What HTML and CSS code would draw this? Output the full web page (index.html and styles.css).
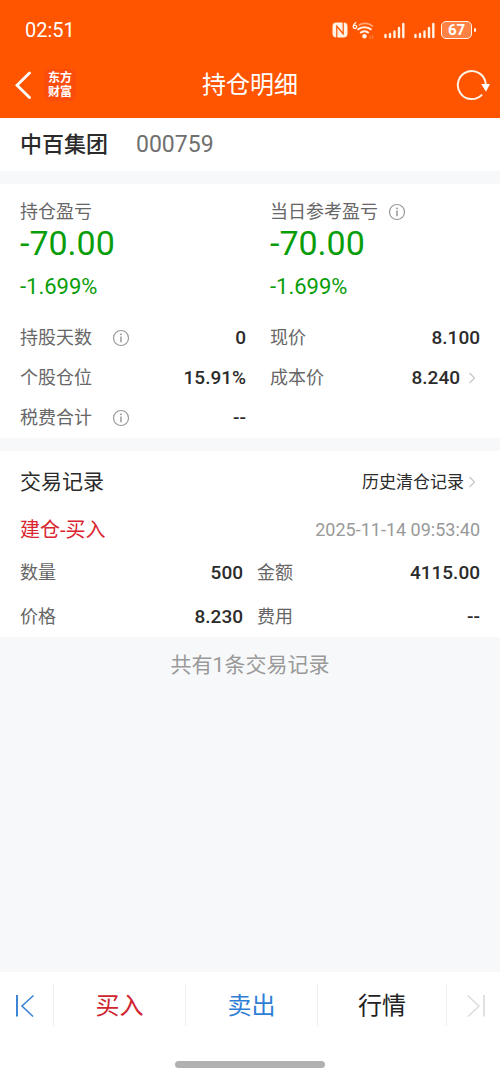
FILE: index.html
```html
<!DOCTYPE html>
<html lang="zh-CN">
<head>
<meta charset="utf-8">
<meta name="viewport" content="width=device-width, initial-scale=1">
<title>持仓明细</title>
<link rel="stylesheet" href="styles.css">
</head>
<body>
<header class="top">
  <div class="status">
    <time class="clock">02:51</time>
    <div class="status-icons">
      <svg class="nfc" width="16" height="16" viewBox="0 0 16 16" aria-hidden="true">
        <rect x=".5" y=".5" width="15" height="15" rx="4" fill="#fff3e6"/>
        <path d="M4.800 16V4.200l5.200 5.900M11.200 0v11.800L6 5.900" fill="none" stroke="#ff5500" stroke-width="1.200"/>
      </svg>
      <svg class="wifi" width="23" height="19" viewBox="0 0 23 19" aria-hidden="true">
        <path d="M4.200 1.200C2.200 2.500 1.200 4 1.200 5.600" fill="none" stroke="#fff3e6" stroke-width="1.300"/>
        <circle cx="3" cy="5.800" r="1.700" fill="none" stroke="#fff3e6" stroke-width="1.300"/>
        <path d="M6.500 4.300a12 12 0 0 1 14.600 1.200" fill="none" stroke="#ffa576" stroke-width="1.600"/>
        <path d="M5.500 8.800a10.500 10.500 0 0 1 14 0M8.200 12a6.500 6.500 0 0 1 8.600 0" fill="none" stroke="#fff3e6" stroke-width="2"/>
        <circle cx="12.500" cy="15.200" r="2.200" fill="#fff3e6"/>
        <path d="M18.200 14v4M20.700 14v4" stroke="#ff7a38" stroke-width="1.200"/>
      </svg>
      <svg class="signal" width="21" height="17" viewBox="0 0 21 17" aria-hidden="true">
        <path d="M1.500 13v2M6 12v3M10.500 9.500V15M15 6V15M19.300 2v13" fill="none" stroke="#fff3e6" stroke-width="2.400" stroke-linecap="round"/>
      </svg>
      <svg class="signal" width="21" height="17" viewBox="0 0 21 17" aria-hidden="true">
        <path d="M1.500 13v2M6 12v3M10.500 9.500V15M15 6V15M19.300 2v13" fill="none" stroke="#fff3e6" stroke-width="2.400" stroke-linecap="round"/>
      </svg>
      <span class="battery"><span class="battery-body">67</span><span class="battery-tip"></span></span>
    </div>
  </div>
  <div class="navbar">
    <div class="nav-left">
      <button class="icon-button" type="button" aria-label="返回">
        <svg width="18" height="28" viewBox="0 0 18 28"><path d="M15.500 2L3 14.300 15.500 26.500" fill="none" stroke="#fff" stroke-width="2.800" stroke-linecap="round"/></svg>
      </button>
      <span class="brand">东方财富</span>
    </div>
    <h1 class="title">持仓明细</h1>
    <div class="nav-right">
      <button class="icon-button" type="button" aria-label="刷新">
        <svg width="34" height="32" viewBox="0 0 34 32"><path d="M26.100 25.600A14 14 0 1 1 29.800 15" fill="none" stroke="#fff3e6" stroke-width="2"/><path d="M25.200 15h8.800L30 22.800z" fill="#fff"/></svg>
      </button>
    </div>
  </div>
</header>

<main class="content">
  <section class="panel stock">
    <h2 class="stock-name">中百集团</h2>
    <span class="stock-code">000759</span>
  </section>

  <section class="panel holdings">
    <div class="summary">
      <div class="label">持仓盈亏</div>
      <div class="profit">-70.00</div>
      <div class="rate">-1.699%</div>
    </div>
    <div class="summary">
      <div class="label label-tight">当日参考盈亏
        <button class="icon-button" type="button" aria-label="当日参考盈亏说明"><svg width="18" height="18" viewBox="0 0 18 18"><circle cx="9" cy="9" r="7.500" fill="none" stroke="#999" stroke-width="1.200"/><path d="M9 7.500v5.700" stroke="#888" stroke-width="1.300"/><circle cx="9" cy="5.300" r=".9" fill="#888"/></svg></button>
      </div>
      <div class="profit">-70.00</div>
      <div class="rate">-1.699%</div>
    </div>
    <dl class="facts facts-left">
      <div class="fact"><dt class="label">持股天数
        <button class="icon-button" type="button" aria-label="持股天数说明"><svg width="18" height="18" viewBox="0 0 18 18"><circle cx="9" cy="9" r="7.500" fill="none" stroke="#999" stroke-width="1.200"/><path d="M9 7.500v5.700" stroke="#888" stroke-width="1.300"/><circle cx="9" cy="5.300" r=".9" fill="#888"/></svg></button></dt><dd class="value">0</dd></div>
      <div class="fact"><dt class="label">个股仓位</dt><dd class="value">15.91%</dd></div>
      <div class="fact"><dt class="label">税费合计
        <button class="icon-button" type="button" aria-label="税费合计说明"><svg width="18" height="18" viewBox="0 0 18 18"><circle cx="9" cy="9" r="7.500" fill="none" stroke="#999" stroke-width="1.200"/><path d="M9 7.500v5.700" stroke="#888" stroke-width="1.300"/><circle cx="9" cy="5.300" r=".9" fill="#888"/></svg></button></dt><dd class="value">--</dd></div>
    </dl>
    <dl class="facts">
      <div class="fact"><dt class="label">现价</dt><dd class="value">8.100</dd></div>
      <div class="fact"><dt class="label">成本价</dt><dd class="value"><a class="more more-wide" href="#cost">8.240 <svg width="12" height="14" viewBox="0 0 12 14" aria-hidden="true"><path d="M1.500 2L6.500 7l-5 5" fill="none" stroke="#c8c8c8" stroke-width="1.300"/></svg></a></dd></div>
    </dl>
  </section>

  <section class="panel records">
    <div class="records-head">
      <h2 class="records-title">交易记录</h2>
      <a class="more history" href="#history">历史清仓记录 <svg width="12" height="14" viewBox="0 0 12 14" aria-hidden="true"><path d="M1.500 2L6.500 7l-5 5" fill="none" stroke="#c8c8c8" stroke-width="1.300"/></svg></a>
    </div>
    <div class="record-head">
      <h3 class="record-type">建仓-买入</h3>
      <time class="record-time">2025-11-14 09:53:40</time>
    </div>
    <dl class="record">
      <div class="entry"><dt class="label">数量</dt><dd class="value">500</dd></div>
      <div class="entry"><dt class="label">金额</dt><dd class="value">4115.00</dd></div>
      <div class="entry"><dt class="label">价格</dt><dd class="value">8.230</dd></div>
      <div class="entry"><dt class="label">费用</dt><dd class="value">--</dd></div>
    </dl>
  </section>
  <p class="total">共有1条交易记录</p>
</main>

<footer class="bottom">
  <nav class="actions">
    <button class="action first" type="button" aria-label="上一个"><svg width="20" height="24" viewBox="0 0 20 24"><path d="M2 1v21.500" stroke="#3d85d4" stroke-width="2"/><path d="M18.500 1.500L7 12l11 10.500" fill="none" stroke="#3d85d4" stroke-width="1.600"/></svg></button>
    <button class="action buy" type="button">买入</button>
    <button class="action sell" type="button">卖出</button>
    <button class="action quote" type="button">行情</button>
    <button class="action last" type="button" aria-label="下一个" disabled><svg width="20" height="24" viewBox="0 0 20 24"><path d="M18 1v21.500" stroke="#ddd" stroke-width="1.800"/><path d="M1.500 1.500L13 12 2 22.500" fill="none" stroke="#ddd" stroke-width="1.600"/></svg></button>
  </nav>
  <div class="home-bar"></div>
</footer>
</body>
</html>
```
FILE: styles.css
```css
* { box-sizing: border-box; }

body {
  margin: 0;
  min-height: 100vh;
  display: flex;
  flex-direction: column;
  background: #f7f8fa;
  color: #2b2b2b;
  font-family: Roboto, "Noto Sans CJK SC", sans-serif;
  font-size: 18px;
  line-height: 24px;
}

h1, h2, h3, p, dl, dd { margin: 0; font-weight: 400; }
svg { display: block; flex: none; }
a { color: inherit; text-decoration: none; }
button { margin: 0; padding: 0; border: 0; background: none; font: inherit; color: inherit; }
.icon-button { display: inline-flex; }

/* Header */
.top { background: #ff5500; color: #fff; }
.status {
  display: flex;
  justify-content: space-between;
  align-items: center;
  height: 52px;
  padding: 8px 24px 0 25px;
}
.clock { font-size: 20px; }
.status-icons { display: flex; align-items: center; }
.wifi { margin-left: 4px; }
.signal { margin-left: 9px; }
.battery { display: flex; align-items: center; gap: 2px; margin-left: 6px; }
.battery-body {
  width: 31px;
  height: 18px;
  border: 1px solid #fff3e6;
  border-radius: 5px;
  background: #ff8244;
  font-size: 15px;
  font-weight: 700;
  line-height: 17px;
  text-align: center;
}
.battery-tip { width: 2px; height: 4px; border-radius: 1px; background: #fff3e6; }
.navbar {
  display: grid;
  grid-template-columns: 1fr auto 1fr;
  align-items: center;
  height: 66px;
  padding: 0 10px;
}
.nav-left { display: flex; align-items: center; gap: 12px; padding-left: 4px; }
.nav-right { display: flex; justify-content: flex-end; }
.brand {
  width: 32px;
  height: 32px;
  padding: 2px 4px;
  border-radius: 6px;
  background: #fc4c0c;
  font-size: 12px;
  font-weight: 700;
  line-height: 14px;
}
.title { font-size: 24px; line-height: 32px; }

/* Panels */
.content { flex: 1; display: flex; flex-direction: column; }
.panel { margin-bottom: 13px; background: #fff; }
.stock { display: flex; align-items: center; gap: 28px; height: 53px; padding: 0 20px; }
.stock-name { font-size: 22px; font-weight: 500; }
.stock-code { font-size: 23px; color: #707070; }

.holdings { display: grid; grid-template-columns: 1fr 1fr; padding-top: 16px; }
.summary { padding-left: 20px; }
.label { display: flex; align-items: center; gap: 20px; color: #666; }
.label-tight { gap: 10px; }
.profit { font-size: 34px; line-height: 38px; color: #0a9d0a; }
.rate { margin-top: 13px; font-size: 22px; color: #0a9d0a; }
.facts { padding: 19px 20px 0; }
.facts-left { padding-right: 4px; }
.fact { display: flex; justify-content: space-between; align-items: center; height: 40px; }
.value { font-size: 19px; font-weight: 500; }
.more { display: flex; align-items: center; }
.more-wide { gap: 8px; }

/* Trade records */
.records { margin-bottom: 0; padding: 7px 20px 0; }
.records-head { display: flex; justify-content: space-between; align-items: center; height: 48px; }
.record-head { display: flex; justify-content: space-between; align-items: center; height: 47px; }
.records-title { font-size: 21px; }
.history { gap: 4px; font-size: 17px; }
.record-type { font-size: 20px; color: #d9252f; }
.record-time { color: #999; }
.record { display: grid; grid-template-columns: 1fr 1fr; gap: 4px 14px; }
.entry { display: flex; justify-content: space-between; align-items: center; height: 40px; }
.total { padding: 14px 0; font-size: 21px; line-height: 28px; text-align: center; color: #999; }

/* Bottom bar */
.bottom { padding: 12px 0 8px; background: #fff; }
.actions { display: grid; grid-template-columns: 53fr 132fr 132fr 129fr 54fr; }
.action { display: flex; align-items: center; justify-content: center; height: 42px; padding-top: 2px; font-size: 24px; }
.action + .action { border-left: 1px solid #eee; }
.first { padding-right: 4px; }
.last { padding-left: 4px; }
.buy { color: #d0252f; }
.sell { color: #2f7ed6; }
.quote { color: #222; }
.home-bar { width: 30%; height: 7px; margin: 35px auto 0; border-radius: 4px; background: #b1b1b1; }
```
